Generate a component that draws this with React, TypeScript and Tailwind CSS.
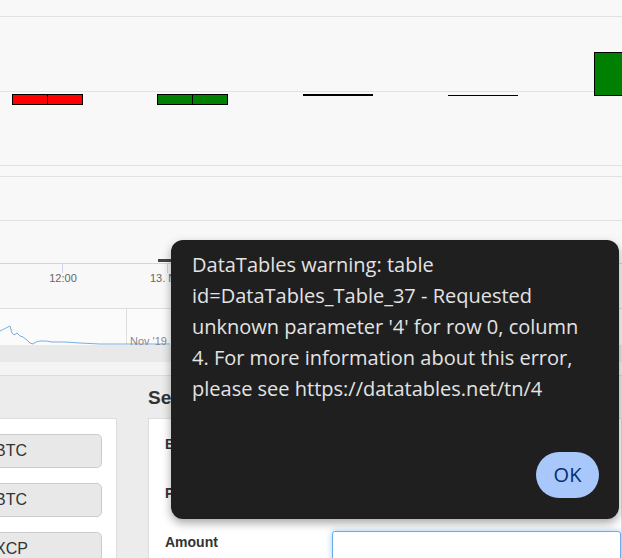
import React from 'react';

const navLine =
  'M0 331 L4 329 L8 327 L10 326 L12 333 L14 335 L17 333 L20 336 L23 337 L27 340 L30 343 L33 344 L36 342 L40 341 L46 341 L52 342 L65 342 L80 343 L100 344 L130 344 L170 344';

const Chart: React.FC = () => (
    <svg width="622" height="375" className="block">
        <rect x="0" y="0" width="622" height="345" fill="#f8f8f8" />
        {/* grid */}
        <line x1="0" x2="622" y1="16.5" y2="16.5" stroke="#e2e2e2" />
        <line x1="0" x2="622" y1="91.5" y2="91.5" stroke="#e2e2e2" />
        <line x1="0" x2="622" y1="165.5" y2="165.5" stroke="#e2e2e2" />
        <line x1="0" x2="622" y1="176.5" y2="176.5" stroke="#e2e2e2" />
        <line x1="0" x2="622" y1="220.5" y2="220.5" stroke="#e2e2e2" />
        <line x1="0" x2="622" y1="263.5" y2="263.5" stroke="#ccd6eb" />
        <line x1="62.5" x2="62.5" y1="263" y2="273" stroke="#ccd6eb" />
        <line x1="167.5" x2="167.5" y1="263" y2="273" stroke="#ccd6eb" />
        <text x="63" y="282" fontSize="11" fill="#666" textAnchor="middle" fontFamily="Liberation Sans, sans-serif">12:00</text>
        <text x="150" y="282" fontSize="11" fill="#666" fontFamily="Liberation Sans, sans-serif">13. Nov</text>

        {/* candles */}
        <rect x="12.5" y="94.5" width="70" height="10" fill="#ff0000" stroke="#000" />
        <line x1="47.5" x2="47.5" y1="94.5" y2="104.5" stroke="#000" />
        <rect x="157.5" y="94.5" width="70" height="10" fill="#008000" stroke="#000" />
        <line x1="192.5" x2="192.5" y1="94.5" y2="104.5" stroke="#000" />
        <line x1="303" x2="373" y1="95" y2="95" stroke="#000" strokeWidth="2" />
        <line x1="448" x2="518" y1="95.5" y2="95.5" stroke="#000" />
        <rect x="594.5" y="52.5" width="40" height="43" fill="#008000" stroke="#000" />
        <rect x="158" y="259" width="14" height="3" fill="#444" />

        {/* navigator */}
        <rect x="0" y="308" width="622" height="37" fill="#fbfbfb" />
        <line x1="0" x2="622" y1="308.5" y2="308.5" stroke="#dedede" />
        <line x1="126.5" x2="126.5" y1="308" y2="345" stroke="#dedede" />
        <path d={navLine} fill="none" stroke="#7aaee0" strokeWidth="1" />
        <text x="130" y="345" fontSize="11" fill="#888" fontFamily="Liberation Sans, sans-serif">Nov '19</text>
        <rect x="0" y="345" width="622" height="17" fill="#e9e9e9" />
        <rect x="0" y="362" width="622" height="13" fill="#f4f4f4" />
    </svg>
);

const coins = ['BTC', 'BTC', 'XCP'];

export default function App() {
    return (
        <div className="relative w-[622px] h-[558px] overflow-hidden bg-[#ececec]" style={{ fontFamily: '"Liberation Sans", Arial, sans-serif' }}>
            <Chart />

            <div className="flex border-t border-[#dcdcdc] pt-[42px]">
                {/* left list */}
                <div className="-ml-[40px] w-[157px] shrink-0 bg-white border border-[#dddddd] pt-[15px] pl-[16px] flex flex-col gap-[15px] h-[200px]">
                    {coins.map((c, i) => (
                        <div
                            key={i}
                            className="w-[125px] h-[34px] flex items-center pl-[17px] bg-[#e8e8e8] border border-[#cccccc] rounded-[5px] text-[16px] text-[#333]"
                        >
                            {c}
                        </div>
                    ))}
                </div>

                {/* right form */}
                <div className="ml-[31px] flex-1 relative">
                    <h3 className="absolute -top-[34px] left-0 text-[19px] font-bold text-[#333]">Sell</h3>
                    <div className="bg-white border border-[#dddddd] h-[200px] pl-[16px] pt-[15px]">
                        <div className="h-[49px] text-[14px] font-bold text-[#333]">Base</div>
                        <div className="h-[49px] text-[14px] font-bold text-[#333]">Price</div>
                        <div className="flex items-start">
                            <div className="w-[167px] text-[14px] font-bold text-[#333]">Amount</div>
                            <div className="mt-[-1px] flex-1 h-[34px] border border-[#66afe9] rounded-[3px] shadow-[0_0_6px_rgba(102,175,233,0.6)] bg-white" />
                        </div>
                    </div>
                </div>
            </div>

            {/* alert dialog */}
            <div
                className="absolute left-[171px] top-[240px] w-[448px] h-[279px] rounded-[12px] bg-[#1f1f1f] shadow-[0_4px_10px_rgba(0,0,0,0.35)] flex flex-col"
                style={{ fontFamily: '"Open Sans", sans-serif' }}
            >
                <p className="pl-[21px] pt-[9px] text-[20px] leading-[31px] text-[#e3e3e3] whitespace-nowrap">
                    DataTables warning: table
                    <br />
                    id=DataTables_Table_37 - Requested
                    <br />
                    unknown parameter '4' for row 0, column
                    <br />
                    4. For more information about this error,
                    <br />
                    please see https://datatables.net/tn/4
                </p>
                <div className="mt-auto flex justify-end pr-[20px] pb-[21px]">
                    <button className="w-[63px] h-[46px] rounded-full bg-[#a8c7fa] text-[#062e6f] text-[20px]">OK</button>
                </div>
            </div>
        </div>
    );
}
